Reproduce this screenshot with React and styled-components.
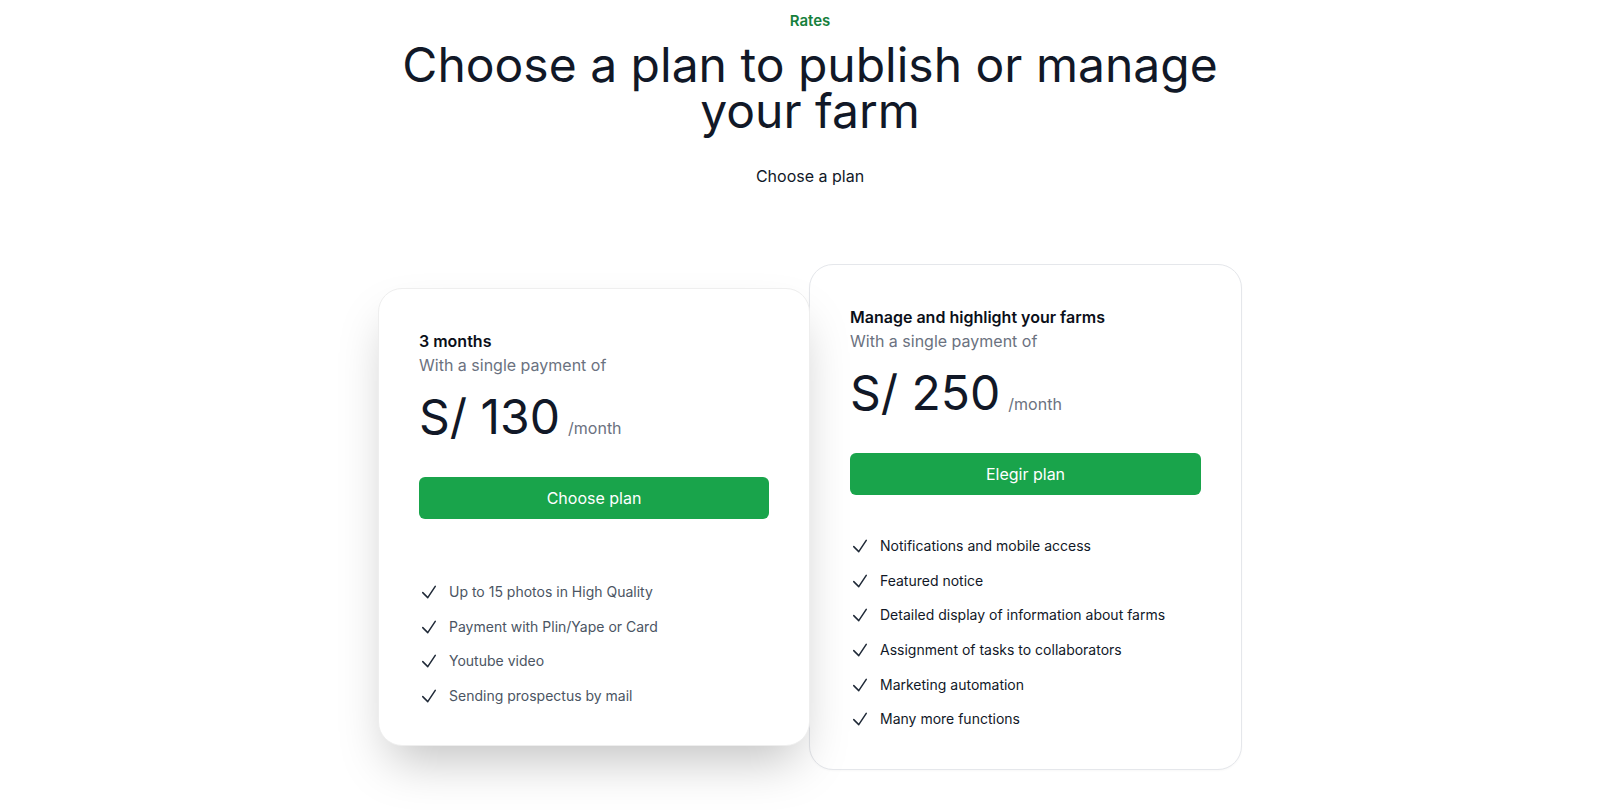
import React from 'react'
import styled, { createGlobalStyle } from 'styled-components'

const GlobalStyle = createGlobalStyle`
    html, body {
        margin: 0;
        padding: 0;
        background: #ffffff;
    }
    body {
        font-family: Inter, "Open Sans", "Liberation Sans", sans-serif;
        color: #111827;
        -webkit-font-smoothing: antialiased;
    }
`

const Page = styled.div`
    padding: 9px 0 40px 20px;
    display: flex;
    flex-direction: column;
    align-items: center;
`

const Eyebrow = styled.p`
    margin: 0;
    font-size: 15px;
    line-height: 24px;
    font-weight: 600;
    color: #16803c;
`

const Heading = styled.h1`
    margin: 9px 0 0;
    font-size: 48px;
    line-height: 46px;
    font-weight: 400;
    color: #111827;
    text-align: center;
    max-width: 860px;
`

const Lead = styled.p`
    margin: 30px 0 0;
    font-size: 16px;
    line-height: 24px;
    color: #111827;
`

const Tiers = styled.div`
    margin-top: 76px;
    display: grid;
    grid-template-columns: 432px 432px;
    align-items: start;
`

const Card = styled.div`
    position: relative;
    box-sizing: border-box;
    background: #ffffff;
    border-radius: 24px;
    padding: 40px 40px ${(p) => (p.featured ? '37px' : '38px')};
    border: 1px solid ${(p) => (p.featured ? '#eeeeee' : '#e5e7eb')};
    margin-top: ${(p) => (p.featured ? '24px' : '0')};
    margin-left: ${(p) => (p.featured ? '0' : '-1px')};
    z-index: ${(p) => (p.featured ? 1 : 0)};
    box-shadow: ${(p) =>
        p.featured ? '0 25px 50px -12px rgba(0, 0, 0, 0.25)' : '0 1px 2px rgba(0, 0, 0, 0.03)'};
`

const Title = styled.h3`
    margin: 0;
    font-size: 16px;
    line-height: 24px;
    font-weight: 600;
    color: #0b0f19;
`

const Note = styled.p`
    margin: 0;
    font-size: 16px;
    line-height: 24px;
    color: #6b7280;
`

const PriceRow = styled.p`
    margin: 16px 0 0;
    display: flex;
    align-items: baseline;
    gap: 8px;
`

const Amount = styled.span`
    font-size: 48px;
    line-height: 48px;
    font-weight: 400;
    color: #111827;
`

const Period = styled.span`
    font-size: 16px;
    color: #6b7280;
`

const Button = styled.a`
    display: block;
    margin-top: 36px;
    height: 42px;
    line-height: 42px;
    border-radius: 6px;
    background: #19a44b;
    color: #ffffff;
    text-align: center;
    font-size: 16px;
    text-decoration: none;
    cursor: pointer;
`

const Features = styled.ul`
    list-style: none;
    margin: ${(p) => (p.featured ? '61px' : '39px')} 0 0;
    padding: 0;
    display: flex;
    flex-direction: column;
    gap: 10.7px;
`

const Feature = styled.li`
    display: flex;
    align-items: center;
    gap: 10px;
    font-size: 14px;
    line-height: 24px;
    color: ${(p) => (p.featured ? '#4b5563' : '#111827')};
`

const Check = () => (
    <svg width="20" height="20" viewBox="0 0 24 24" fill="none" stroke="#1f2937" strokeWidth="1.8" strokeLinecap="round" strokeLinejoin="round">
        <path d="M4.5 12.75l6 6 9-13.5" />
    </svg>
)

const tiers = [
    {
        name: '3 months',
        price: 'S/ 130',
        cta: 'Choose plan',
        featured: true,
        features: [
            'Up to 15 photos in High Quality',
            'Payment with Plin/Yape or Card',
            'Youtube video',
            'Sending prospectus by mail',
        ],
    },
    {
        name: 'Manage and highlight your farms',
        price: 'S/ 250',
        cta: 'Elegir plan',
        featured: false,
        features: [
            'Notifications and mobile access',
            'Featured notice',
            'Detailed display of information about farms',
            'Assignment of tasks to collaborators',
            'Marketing automation',
            'Many more functions',
        ],
    },
]

export default function App() {
    return (
        <React.Fragment>
            <GlobalStyle />
            <Page>
                <Eyebrow>Rates</Eyebrow>
                <Heading>Choose a plan to publish or manage your farm</Heading>
                <Lead>Choose a plan</Lead>
                <Tiers>
                    {tiers.map((tier) => (
                        <Card key={tier.name} featured={tier.featured}>
                            <Title>{tier.name}</Title>
                            <Note>With a single payment of</Note>
                            <PriceRow>
                                <Amount>{tier.price}</Amount>
                                <Period>/month</Period>
                            </PriceRow>
                            <Button>{tier.cta}</Button>
                            <Features featured={tier.featured}>
                                {tier.features.map((f) => (
                                    <Feature key={f} featured={tier.featured}>
                                        <Check />
                                        {f}
                                    </Feature>
                                ))}
                            </Features>
                        </Card>
                    ))}
                </Tiers>
            </Page>
        </React.Fragment>
    )
}
